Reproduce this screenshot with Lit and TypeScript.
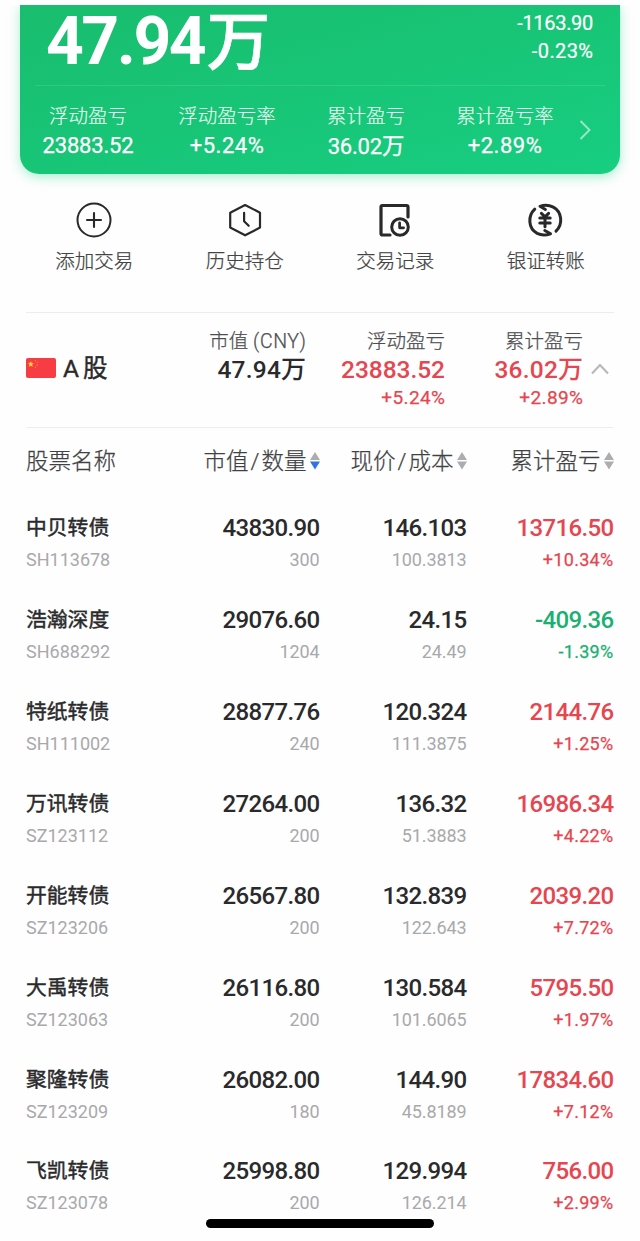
import { LitElement, html, css, svg } from "lit";
import { customElement } from "lit/decorators.js";

interface Holding {
  name: string; code: string; value: string; qty: string;
  price: string; cost: string; gain: string; rate: string;
}

const h = (name: string, code: string, value: string, qty: string, price: string, cost: string, gain: string, rate: string): Holding =>
  ({ name, code, value, qty, price, cost, gain, rate });

const holdings: Holding[] = [
  h("中贝转债", "SH113678", "43830.90", "300", "146.103", "100.3813", "13716.50", "+10.34%"),
  h("浩瀚深度", "SH688292", "29076.60", "1204", "24.15", "24.49", "-409.36", "-1.39%"),
  h("特纸转债", "SH111002", "28877.76", "240", "120.324", "111.3875", "2144.76", "+1.25%"),
  h("万讯转债", "SZ123112", "27264.00", "200", "136.32", "51.3883", "16986.34", "+4.22%"),
  h("开能转债", "SZ123206", "26567.80", "200", "132.839", "122.643", "2039.20", "+7.72%"),
  h("大禹转债", "SZ123063", "26116.80", "200", "130.584", "101.6065", "5795.50", "+1.97%"),
  h("聚隆转债", "SZ123209", "26082.00", "180", "144.90", "45.8189", "17834.60", "+7.12%"),
  h("飞凯转债", "SZ123078", "25998.80", "200", "129.994", "126.214", "756.00", "+2.99%"),
];

const summary = [
  ["浮动盈亏", "23883.52", ""],
  ["浮动盈亏率", "+5.24%", ""],
  ["累计盈亏", "36.02", "万"],
  ["累计盈亏率", "+2.89%", ""],
];

const icons = {
  add: svg`<circle cx="20" cy="20" r="16.5" stroke-width="2"/><path d="M20 13v14M13 20h14" stroke-width="2.1"/>`,
  history: svg`<path d="M20.3 5 35.2 12.7V27.6L20.3 35.3 5.4 27.6V12.7Z" transform="translate(.8 0)" stroke-width="2.2"/><path d="M20.1 12.8v8.4l4.6 4.6" stroke-width="2.2"/>`,
  record: svg`<path d="M15 35H7.5Q6 35 6 33.5V7Q6 5.5 7.500 5.500H31.500Q33 5.500 33 7V17" stroke-width="3.200"/><circle cx="25" cy="27" r="8.300" stroke-width="3"/><path d="M24.600 22.800v5h4" stroke-width="2.700"/>`,
  transfer: svg`<path d="M9.800 9.200C2.600 15.800 3 28.500 12.200 33.400C16 35.300 20.500 35.500 25.500 33.800L19.800 30.500" stroke-width="3"/><path d="M31 31.200C38 24.500 37.300 12 28.300 7.100C24 4.900 19.500 4.700 15 6.300L20.400 9.500" stroke-width="3"/><path d="M16.400 13.300l3.600 3.500 3.600-3.500M14.800 18h10.400M14.800 23h10.400M20 17v9.800" stroke-width="3"/>`,
};

const actions = [
  ["添加交易", icons.add],
  ["历史持仓", icons.history],
  ["交易记录", icons.record],
  ["银证转账", icons.transfer],
] as const;

const sortIcon = (active: boolean) => html`
  <svg class="sort" viewBox="0 0 10 18" width="10" height="18">
    <path d="M5 0 10 8H0Z" fill="#adadb0"/>
    <path d="M5 17.500 10 9.500H0Z" fill=${active ? "#2e74e6" : "#adadb0"}/>
  </svg>`;

@customElement("app-root")
export class AppRoot extends LitElement {
  static styles = css`
    :host {
      display: block; height: 1241px; overflow: hidden; position: relative;
      box-sizing: border-box; padding-top: 5px; background: #fefefe; color: #2a2a2c;
      font-family: Roboto, "Noto Sans CJK SC", sans-serif; font-weight: 500; white-space: nowrap;
    }
    svg { display: block; flex: none; }
    .card {
      margin: 0 20px; height: 169px; color: #fff; border-radius: 0 0 19px 19px;
      background: linear-gradient(165deg, #19bd6d 0%, #18c577 50%, #17ce81 100%);
      box-shadow: 0 3px 12px rgba(30, 215, 135, .38); clip-path: inset(0 -30px -30px -30px);
    }
    .top { height: 80px; margin: 0 15px; padding: 0 12px 0 11px; display: flex; justify-content: space-between; border-bottom: 1px solid rgba(255,255,255,.11); }
    .total { display: flex; font-weight: 700; font-size: 66px; line-height: 73px; letter-spacing: -2.5px; }
    .total .wan { font-size: 64px; font-weight: 500; line-height: 76px; letter-spacing: 0; margin-left: 2.500px; -webkit-text-stroke: .6px; }
    .today { font-size: 20px; line-height: 28px; letter-spacing: -.3px; text-align: right; padding-top: 4px; font-weight: 400; -webkit-text-stroke: .2px; }
    .today-rate { letter-spacing: .4px; margin-right: -.4px; }
    .stats { display: flex; padding-right: 25px; margin-left: -1.500px; }
    .stat { width: 139px; flex: none; text-align: center; padding-top: 16px; }
    .stat-label { font-size: 19.500px; line-height: 30px; font-weight: 300; color: rgba(255,255,255,.88); -webkit-text-stroke: .2px; }
    .stat-value { font-size: 22px; line-height: 28px; letter-spacing: -.2px; font-weight: 400; -webkit-text-stroke: .25px; }
    .stat-value.pct { letter-spacing: .5px; }
    .wan { font-size: 1.02em; letter-spacing: 0; }
    .next { margin: 33px 0 0 3px; }
    .actions { display: flex; margin: 0 18.500px; padding-top: 26px; height: 112px; }
    .action { width: 150.500px; flex: none; display: flex; flex-direction: column; align-items: center; }
    .action svg { stroke: #29292b; fill: none; stroke-linecap: round; stroke-linejoin: round; }
    .action-label { font-size: 19.500px; line-height: 30px; margin: 7px 0 0 1px; font-weight: 300; color: #444; -webkit-text-stroke: .25px; }
    .market { margin: 0 26px; height: 114px; border: solid #ededee; border-width: 1px 0; display: grid; grid-template-columns: 120px 160px 139px 138px 1fr; align-items: start; }
    .region { display: flex; align-items: center; gap: 7px; line-height: 30px; padding-top: 41px; font-size: 24.500px; }
    .region svg { margin-top: -3px; }
    .region-name { display: flex; gap: 4px; font-weight: 400; -webkit-text-stroke: .4px; }
    .m-col { text-align: right; padding-top: 14px; }
    .m-label { font-size: 19.500px; line-height: 29px; font-weight: 300; color: #4e4e50; -webkit-text-stroke: .25px; }
    .currency { letter-spacing: .6px; margin-right: -.6px; }
    .m-value { font-size: 24.500px; line-height: 28px; letter-spacing: -.05px; }
    .m-value.mixed { letter-spacing: .2px; }
    .m-rate { font-size: 19px; line-height: 27px; letter-spacing: .4px; margin-right: -.4px; font-weight: 400; -webkit-text-stroke: .25px; }
    .fold { margin: 49px 0 0 7px; }
    .head, .row { display: grid; grid-template-columns: 120px 173.500px 147px 147px; margin: 0 26px; text-align: right; }
    .head { height: 71.400px; padding-top: 1px; line-height: 65px; font-size: 22.500px; font-weight: 300; color: #414143; -webkit-text-stroke: .25px; }
    .cell { display: flex; justify-content: flex-end; align-items: flex-start; gap: 3px; }
    .slash { padding: 0 2px; }
    .sort { margin: 23px 0 0 0; }
    .first { text-align: left; }
    .row { height: 91.860px; }
    .main { font-size: 24px; line-height: 32px; padding-top: 12px; letter-spacing: -.65px; margin-right: 0; }
    .main.name { font-size: 20.800px; letter-spacing: 0; padding-top: 13px; line-height: 31px; font-weight: 400; -webkit-text-stroke: .45px; }
    .sub { font-size: 18px; line-height: 31px; color: #a9a9ab; font-weight: 400; }
    .sub.num { letter-spacing: -.1px; }
    .sub.rate { letter-spacing: .3px; -webkit-text-stroke: .25px; }
    .up, .sub.up { color: #e5464f; }
    .down, .sub.down { color: #1bb072; }
    .home { position: absolute; left: 206px; top: 1219px; width: 228px; height: 9px; border-radius: 5px; background: #000; }
  `;

  private row(r: Holding) {
    const tone = r.gain.startsWith("-") ? "down" : "up";
    return html`<div class="row">
      <div class="first"><div class="main name">${r.name}</div><div class="sub">${r.code}</div></div>
      <div><div class="main">${r.value}</div><div class="sub num">${r.qty}</div></div>
      <div><div class="main">${r.price}</div><div class="sub num">${r.cost}</div></div>
      <div><div class="main ${tone}">${r.gain}</div><div class="sub rate ${tone}">${r.rate}</div></div>
    </div>`;
  }

  render() {
    return html`
      <section class="card">
        <div class="top">
          <div class="total">47.94<span class="wan">万</span></div>
          <div class="today"><div>-1163.90</div><div class="today-rate">-0.23%</div></div>
        </div>
        <div class="stats">
          ${summary.map(([label, value, unit]) => html`<div class="stat">
            <div class="stat-label">${label}</div>
            <div class="stat-value ${value.endsWith("%") ? "pct" : ""}">${value}${unit ? html`<span class="wan">${unit}</span>` : ""}</div>
          </div>`)}
          <svg class="next" width="14" height="22" viewBox="0 0 14 22"><path d="M2.500 2 11.500 11 2.500 20" fill="none" stroke="#fff" stroke-opacity=".55" stroke-width="2"/></svg>
        </div>
      </section>
      <nav class="actions">
        ${actions.map(([label, icon]) => html`<div class="action">
          <svg width="40" height="40" viewBox="0 0 40 40">${icon}</svg>
          <div class="action-label">${label}</div>
        </div>`)}
      </nav>
      <section class="market">
        <div class="region">
          <svg width="30" height="20" viewBox="0 0 30 20">
            <rect width="30" height="20" rx="2" fill="#f73c43"/>
            <path d="m4.800 3.700.7 1.500 1.700.2-1.200 1.200.3 1.700-1.500-.8-1.500.8.3-1.700-1.200-1.200 1.700-.2Z" fill="#ffe23c" stroke="#ffd23c" stroke-width=".5"/>
            <g fill="#ff9a3c"><circle cx="9.500" cy="2.700" r=".6"/><circle cx="11.300" cy="4.600" r=".6"/><circle cx="11.300" cy="7.200" r=".6"/><circle cx="9.500" cy="9.200" r=".6"/></g>
          </svg>
          <div class="region-name"><span>A</span><span>股</span></div>
        </div>
        <div class="m-col"><div class="m-label">市值 <span class="currency">(CNY)</span></div><div class="m-value mixed">47.94<span class="wan">万</span></div></div>
        <div class="m-col"><div class="m-label">浮动盈亏</div><div class="m-value up">23883.52</div><div class="m-rate up">+5.24%</div></div>
        <div class="m-col"><div class="m-label">累计盈亏</div><div class="m-value mixed up">36.02<span class="wan">万</span></div><div class="m-rate up">+2.89%</div></div>
        <svg class="fold" width="20" height="14" viewBox="0 0 20 14"><path d="M2 11.500 10 3 18 11.500" fill="none" stroke="#b9b9bb" stroke-width="2.200"/></svg>
      </section>
      <div class="head">
        <div class="first">股票名称</div>
        <div class="cell"><span>市值<span class="slash">/</span>数量</span>${sortIcon(true)}</div>
        <div class="cell"><span>现价<span class="slash">/</span>成本</span>${sortIcon(false)}</div>
        <div class="cell"><span>累计盈亏</span>${sortIcon(false)}</div>
      </div>
      <main>${holdings.map((r) => this.row(r))}</main>
      <div class="home"></div>
    `;
  }
}
